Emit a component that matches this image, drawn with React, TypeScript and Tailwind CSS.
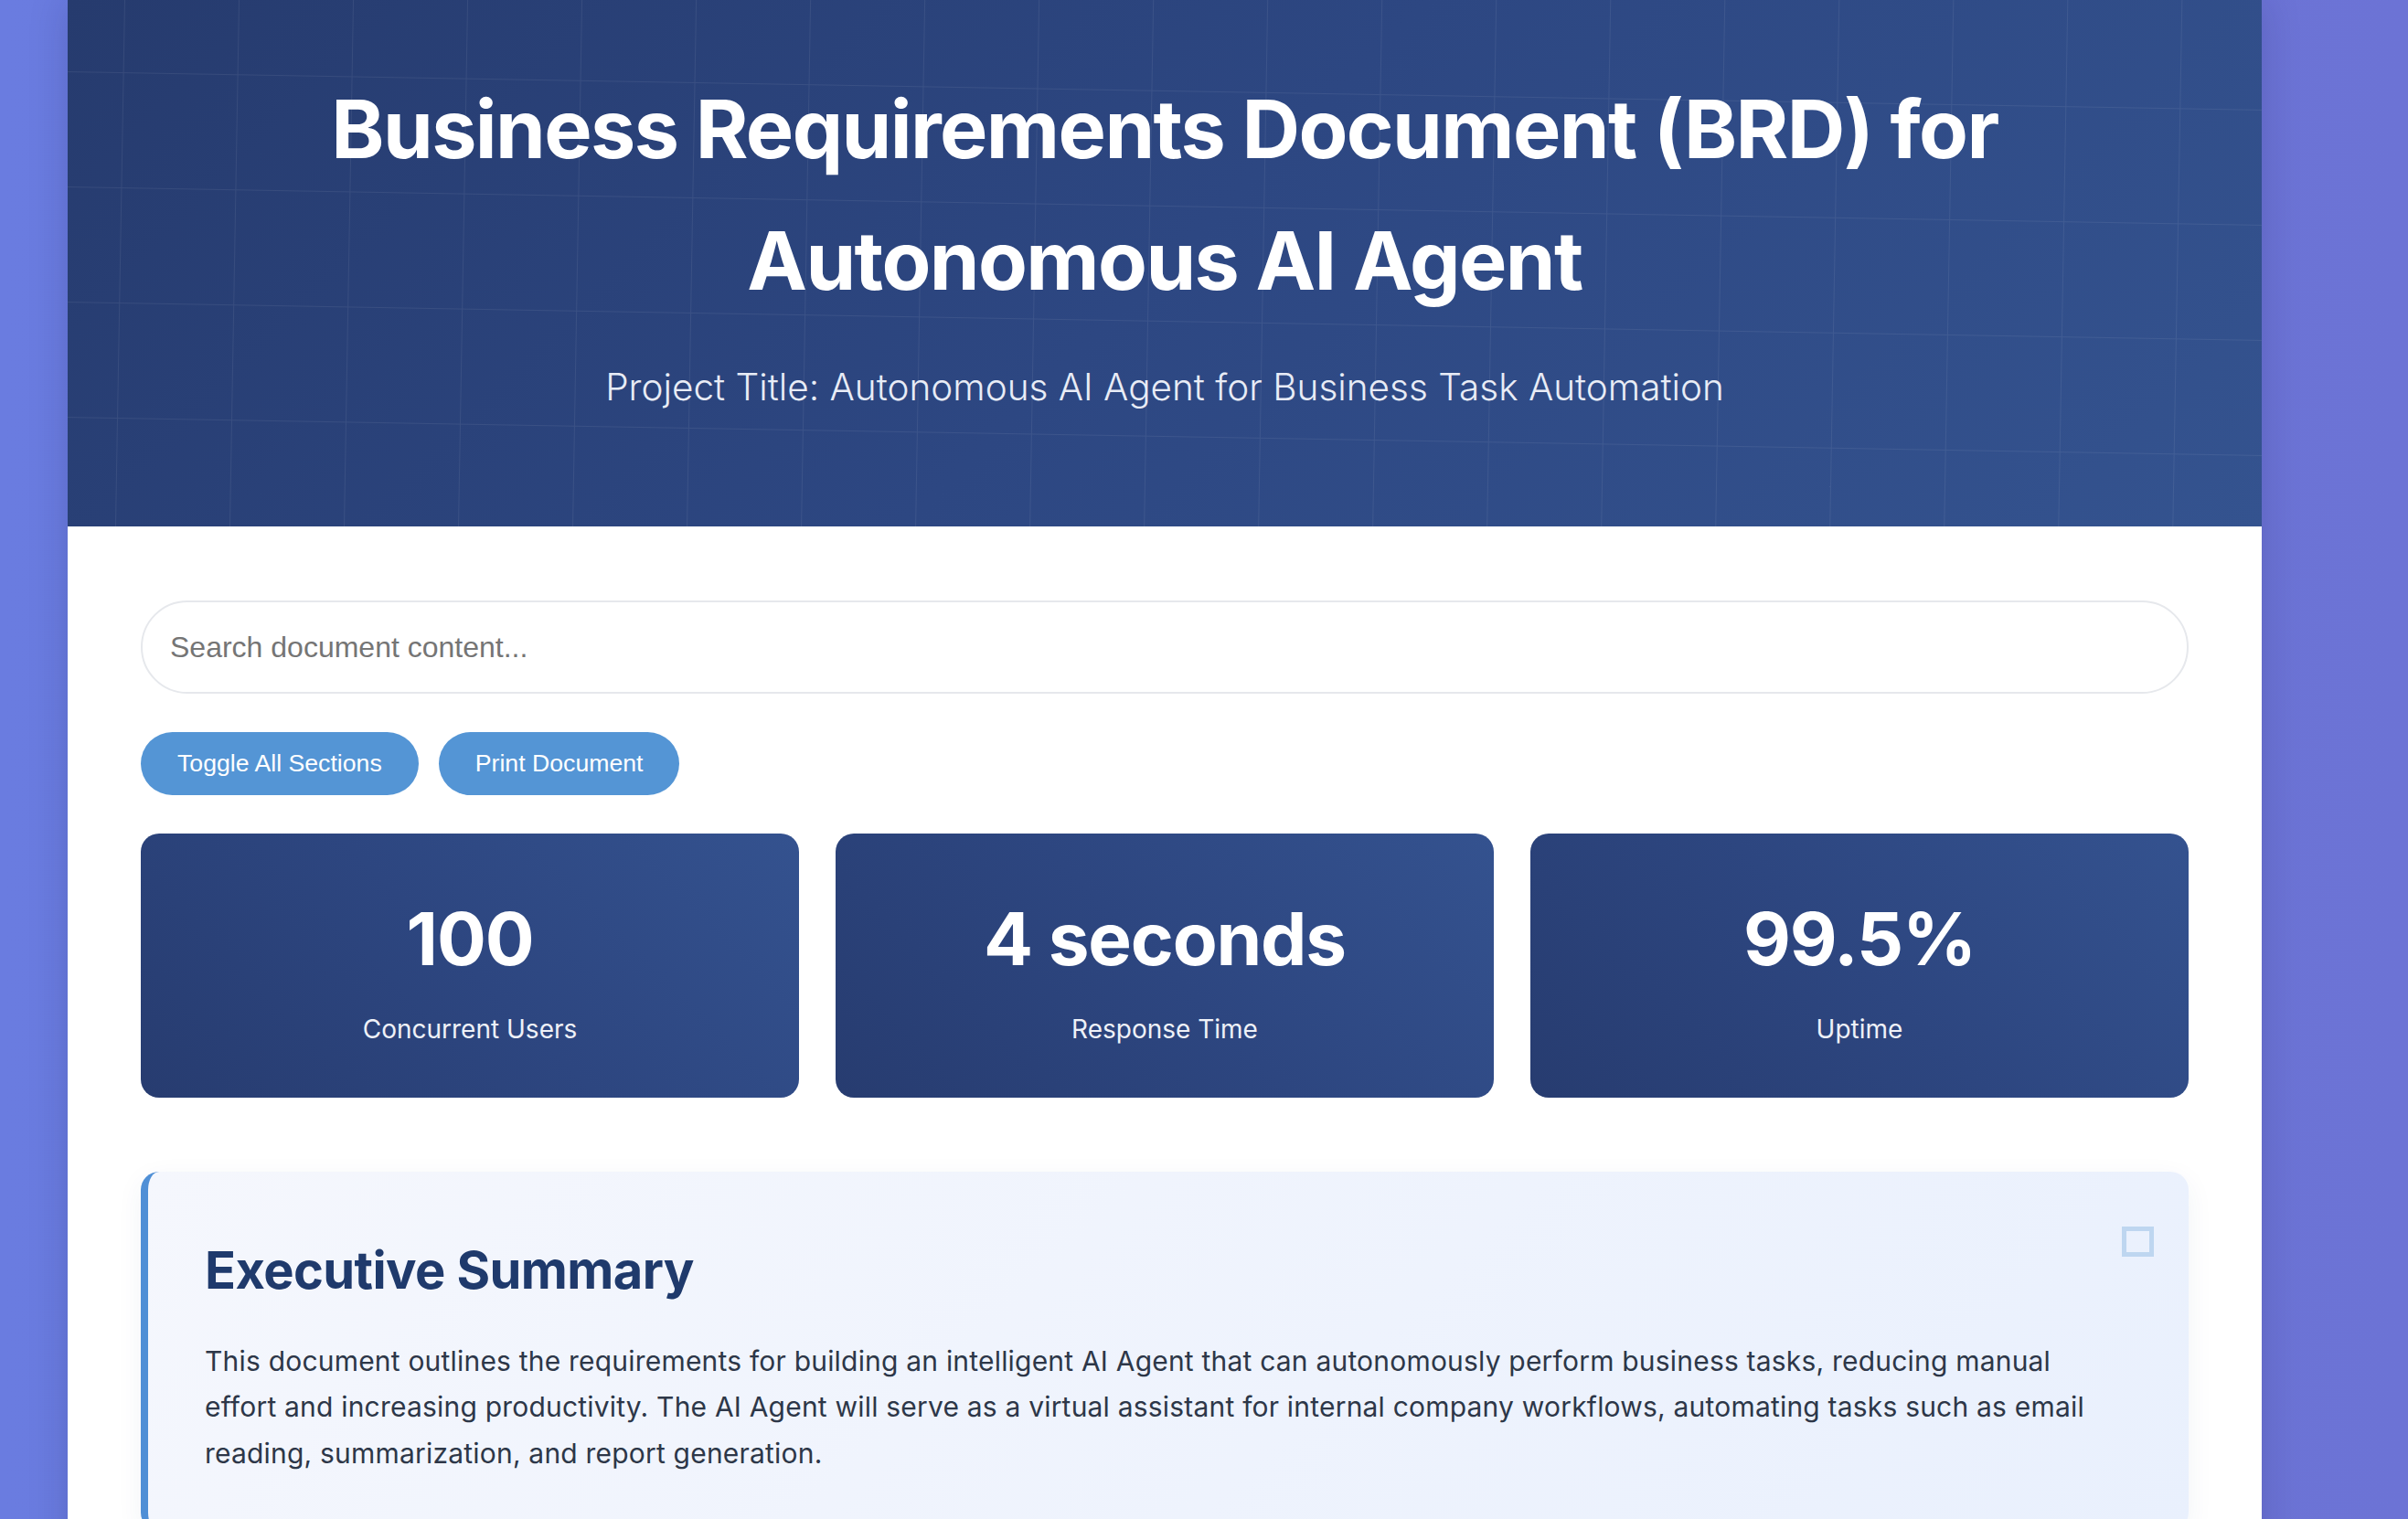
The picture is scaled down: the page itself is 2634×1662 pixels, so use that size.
import React from "react";

const stats = [
  { value: "100", label: "Concurrent Users" },
  { value: "4 seconds", label: "Response Time" },
  { value: "99.5%", label: "Uptime" },
];

function HeaderGrid() {
  return (
    <svg className="absolute inset-0 h-full w-full" aria-hidden="true">
      <defs>
        <pattern
          id="brd-grid"
          width="125"
          height="126"
          patternUnits="userSpaceOnUse"
          patternTransform="rotate(1) translate(62 78)"
        >
          <path d="M0 0 H125 M0 0 V126" fill="none" stroke="rgba(255,255,255,0.07)" strokeWidth="2" />
        </pattern>
      </defs>
      <rect width="100%" height="100%" fill="url(#brd-grid)" />
    </svg>
  );
}

export default function App() {
  return (
    <div className="min-h-screen w-full bg-[linear-gradient(to_right,#6a7ce0,#6b76d8_60%,#6c73d5)] [font-family:Inter,'Noto_Sans',sans-serif]">
      <div className="ml-[74px] w-[2400px] bg-white shadow-[0_0_40px_rgba(20,20,80,0.18)]">
        <header className="relative overflow-hidden bg-[linear-gradient(135deg,#263b6e_0%,#2d4782_50%,#34538f_100%)] pb-[124px] pt-[69px] text-center text-white">
          <HeaderGrid />
          <div className="relative">
            <h1 className="mx-auto text-[88px] font-bold leading-[144px] tracking-[-1.6px]">
              Business Requirements Document (BRD) for
              <br />
              Autonomous AI Agent
            </h1>
            <p className="mt-[38px] text-[40.5px] font-light leading-[57px] text-[#e8ecf6]">
              Project Title: Autonomous AI Agent for Business Task Automation
            </p>
          </div>
        </header>

        <main className="px-[80px] pb-[80px] pt-[81px]">
          <input
            type="text"
            placeholder="Search document content..."
            className="block h-[102px] w-full rounded-full border-2 border-[#e6e8ec] bg-white px-[30px] text-[32px] text-[#333] outline-none placeholder:text-[#757575] [font-family:'Liberation_Sans',Arial,sans-serif]"
          />

          <div className="mt-[42px] flex gap-[22px] [font-family:'Liberation_Sans',Arial,sans-serif]">
            <button className="rounded-full bg-[#5495d5] px-[40px] py-[20px] text-[26.67px] leading-[29px] text-white">
              Toggle All Sections
            </button>
            <button className="rounded-full bg-[#5495d5] px-[40px] py-[20px] text-[26.67px] leading-[29px] text-white">
              Print Document
            </button>
          </div>

          <div className="mt-[42px] grid grid-cols-3 gap-[40px]">
            {stats.map((s) => (
              <div
                key={s.label}
                className="rounded-[20px] bg-[linear-gradient(45deg,#273c70_0%,#2d4680_50%,#34528f_100%)] pb-[54px] pt-[67px] text-center text-white"
              >
                <div className="text-[80px] font-bold leading-[96px] tracking-[-1.2px]">{s.value}</div>
                <div className="mt-[30px] text-[28px] leading-[42px] text-[#eef1f8]">{s.label}</div>
              </div>
            ))}
          </div>

          <section className="relative mt-[81px] rounded-[20px] border-l-[8px] border-[#4f8fd6] bg-[linear-gradient(135deg,#f5f7fd_0%,#e9f0fd_100%)] pb-[60px] pl-[62px] pr-[70px] pt-[75px] shadow-[0_8px_30px_rgba(30,60,120,0.06)]">
            <div className="absolute right-[38px] top-[60px] h-[33px] w-[35px] border-[5px] border-[#bed6f0]" />
            <h2 className="text-[56px] font-bold leading-[67px] tracking-[-0.6px] text-[#1f3a6c]">Executive Summary</h2>
            <p className="mt-[40px] text-[30px] leading-[50.4px] tracking-[0.2px] text-[#2d3748]">
              This document outlines the requirements for building an intelligent AI Agent that can autonomously perform
              business tasks, reducing manual effort and increasing productivity. The AI Agent will serve as a virtual
              assistant for internal company workflows, automating tasks such as email reading, summarization, and report
              generation.
            </p>
          </section>
        </main>
      </div>
    </div>
  );
}
